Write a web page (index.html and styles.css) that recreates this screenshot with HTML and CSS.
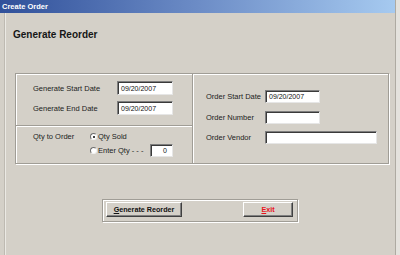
FILE: index.html
```html
<!DOCTYPE html>
<html lang="en">

<head>
    <meta charset="UTF-8">
    <title>Create Order</title>
    <link rel="stylesheet" href="styles.css">
</head>

<body>
    <div class="window">
        <div class="titlebar">Create Order</div>
        <div class="client">
            <h1 class="heading">Generate Reorder</h1>

            <div class="groups">
                <div class="left">
                    <div class="dates">
                        <label>Generate Start Date</label>
                        <div class="field">09/20/2007</div>
                        <label>Generate End Date</label>
                        <div class="field">09/20/2007</div>
                    </div>
                    <div class="qty">
                        <label>Qty to Order</label>
                        <div class="option wide"><span class="radio checked"></span>Qty Sold</div>
                        <div class="option"><span class="radio"></span>Enter Qty - - -</div>
                        <div class="field num">0</div>
                    </div>
                </div>
                <div class="right">
                    <label>Order Start Date</label>
                    <div class="field w55">09/20/2007</div>
                    <label>Order Number</label>
                    <div class="field w55"></div>
                    <label>Order Vendor</label>
                    <div class="field w112"></div>
                </div>
            </div>

            <div class="buttons">
                <button class="btn gen"><u>G</u>enerate Reorder</button>
                <button class="btn exit"><u>E</u>xit</button>
            </div>
        </div>
    </div>
</body>

</html>
```

FILE: styles.css
```css
* {
    padding: 0;
    margin: 0;
    box-sizing: border-box;
}

body {
    background-color: #e4e2dd;
    font-family: "Liberation Sans", Arial, sans-serif;
    font-size: 7.5px;
    color: #1c1c1c;
}

.window {
    width: 396px;
    height: 255px;
    background-color: #d4d0c8;
    border-right: 1px solid #aeaaa2;
    display: flex;
    flex-direction: column;
}

.titlebar {
    height: 13px;
    line-height: 13px;
    padding-left: 2px;
    color: #fff;
    font-weight: bold;
    font-size: 7.5px;
    background: linear-gradient(to right, #30509a, #6c8cc6 50%, #a6caf0);
}

.client {
    flex: 1;
    margin-left: 4px;
    border-left: 1px solid #bebab2;
    box-shadow: inset 1px 0 0 #ebe9e4;
    display: flex;
    flex-direction: column;
}

.heading {
    margin: 16px 0 0 8px;
    font-size: 10px;
    line-height: 12px;
    font-weight: bold;
    color: #161616;
}

/* 分组框 */
.groups {
    display: flex;
    margin: 32px 0 0 10px;
    width: 374px;
    height: 91px;
    border: 1px solid #a09d96;
    box-shadow: inset 1px 1px 0 #fff, 1px 1px 0 #fff;
}

.left {
    width: 177px;
    border-right: 1px solid #a09d96;
    box-shadow: 1px 0 0 #fff;
    display: flex;
    flex-direction: column;
}

.dates {
    height: 52px;
    border-bottom: 1px solid #a09d96;
    box-shadow: 0 1px 0 #fff;
    padding: 7px 0 0 17px;
    display: grid;
    grid-template-columns: 84px 56px;
    grid-auto-rows: 14px;
    row-gap: 6px;
    align-items: center;
}

.qty {
    padding: 4px 0 0 17px;
    display: grid;
    grid-template-columns: 57px 60px 23px;
    grid-template-rows: 13px 14px;
    align-items: center;
}

.qty label {
    grid-row: 1;
}

.option {
    display: flex;
    align-items: center;
    grid-column: 2;
    white-space: nowrap;
}

.option.wide {
    grid-column: 2 / 4;
}

.radio {
    width: 7px;
    height: 7px;
    border-radius: 50%;
    background-color: #fff;
    border: 1px solid;
    border-color: #6e6e6e #f2f2f2 #f2f2f2 #6e6e6e;
    margin-right: 1px;
    position: relative;
}

.radio.checked::after {
    content: '';
    position: absolute;
    left: 1.5px;
    top: 1.5px;
    width: 2px;
    height: 2px;
    border-radius: 50%;
    background-color: #000;
}

.right {
    flex: 1;
    padding: 16px 0 0 13px;
    display: grid;
    grid-template-columns: 59px auto;
    grid-auto-rows: 13px;
    row-gap: 7.5px;
    align-content: start;
    align-items: center;
}

label {
    white-space: nowrap;
}

.field {
    height: 100%;
    background-color: #fff;
    border: 1px solid;
    border-color: #7e7e7e #e6e6e6 #e6e6e6 #7e7e7e;
    box-shadow: inset 1px 1px 0 #3a3a3a;
    font-size: 7px;
    padding-left: 3px;
    display: flex;
    align-items: center;
    color: #111;
}

.field.num {
    height: 13px;
    justify-content: flex-end;
    padding-right: 5px;
}

.w55 {
    width: 55px;
}

.w112 {
    width: 112px;
}

/* 按钮 */
.buttons {
    margin: 35px 0 0 97px;
    width: 196px;
    height: 23px;
    border: 1px solid #a09d96;
    box-shadow: inset 1px 1px 0 #fff, 1px 1px 0 #fff;
    padding: 2px 4px 0 3px;
    display: flex;
    justify-content: space-between;
    align-items: flex-start;
}

.btn {
    height: 15px;
    background-color: #d4d0c8;
    border: 1px solid;
    border-color: #fff #404040 #404040 #fff;
    box-shadow: inset -1px -1px 0 #808080;
    font-family: "Liberation Sans", Arial, sans-serif;
    font-size: 7.2px;
    font-weight: bold;
    color: #111;
}

.gen {
    width: 76px;
}

.exit {
    width: 50px;
    color: #e8141c;
}
```
